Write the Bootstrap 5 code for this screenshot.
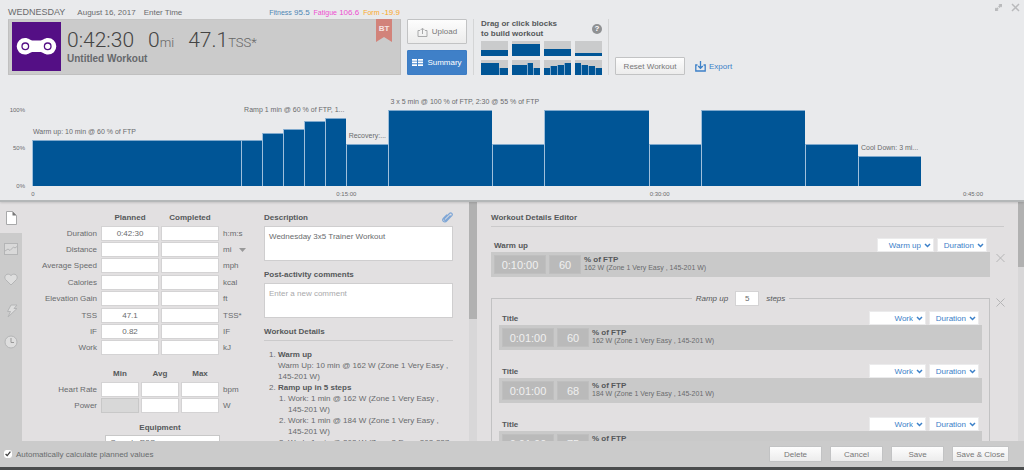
<!DOCTYPE html>
<html lang="en">
<head>
<meta charset="utf-8">
<meta name="viewport" content="width=device-width, initial-scale=1">
<title>Untitled Workout</title>
<link rel="stylesheet" href="https://cdn.jsdelivr.net/npm/bootstrap@5.3.0/dist/css/bootstrap.min.css">
<script src="https://cdn.jsdelivr.net/npm/bootstrap@5.3.0/dist/js/bootstrap.bundle.min.js"></script>
<style>
  :root { --blue: #005596; --link: #3c80c8; --ink: #696b6d; --strong: #55585a; --grey: #cbcbcb; --plot: 76px; }
  body { font: 8px/11px "Liberation Sans", Arial, sans-serif; color: var(--ink); background: #e2e0e1; }
  b, strong, h2, h3, .heading { font-size: 8px; line-height: 11px; font-weight: 700; color: var(--strong); margin: 0; }
  input, select, textarea, button { font-family: inherit; color: inherit; }
  svg { display: block; flex: none; }

  /* top panel */
  .top-panel { background: #e9eaec; border-bottom: 2px solid #b4b7b8; padding: 5px 8px 0; position: relative; box-shadow: 0 1px 2px #0002; }
  .window-tools { top: 3px; right: 4px; }
  .icon-btn { background: none; border: 0; padding: 0; color: #b9babc; }
  .day { font-size: 9px; }
  .metric-name { font-size: 7px; }
  .date-row { height: 14px; width: 392px; }
  .tools-row { height: 56px; gap: 6px; }
  .summary-box { flex: 0 1 393px; background: var(--grey); border: 1px solid #c0c0c0; border-top-color: #c6c6c6; padding: 2px 3px; }
  .sport { width: 49px; height: 49px; background: #540f85; }
  .totals-col { padding-left: 6px; }
  .totals { font-family: Roboto, "Liberation Sans", sans-serif; font-weight: 300; font-size: 21px; line-height: 24px; color: #444; padding-top: 6px; gap: 14px; }
  .totals small { font-size: 13px; color: #666; }
  .totals-col h2 { font-size: 10px; line-height: 8px; color: #66686b; }
  .ribbon { width: 16px; height: 23px; top: -1px; right: 8px; background: #d2837a; color: #f6e4e2; font-weight: 700; text-align: center; line-height: 19px; clip-path: polygon(0 0, 100% 0, 100% 100%, 50% 78%, 0 100%); }
  .tool { --bs-btn-border-radius: 1px; --bs-btn-padding-x: 4px; --bs-btn-padding-y: 0; --bs-btn-font-size: 8px; --bs-btn-line-height: 11px; --bs-btn-color: #777; --bs-btn-border-color: #c2c3c4; --bs-btn-hover-color: #555; --bs-btn-hover-border-color: #aaa; background: linear-gradient(#fdfdfd, #ececec); }
  .tool-main { --bs-btn-color: #fff; --bs-btn-border-color: #3c7cc4; --bs-btn-hover-color: #fff; background: #3f80c8; }
  .tool-stack { width: 60px; }
  .tool-stack .tool { height: 25px; }
  .reset { height: 18px; width: 70px; }
  .builder { border: solid #d4d5d6; border-width: 0 1px; padding: 0 6px 0 7px; width: 136px; }
  .builder .heading { line-height: 10px; }
  .thumbs { display: grid; grid-template-columns: repeat(4, 1fr); grid-auto-rows: 15px; gap: 4px; }
  .thumbs button { background: #cacbcc; border: 0; padding: 0; display: flex; align-items: flex-end; }
  .thumbs i { background: var(--blue); flex: 1; }
  .thumbs i + i { border-left: 1px solid #7fa9cd; }
  .help { width: 10px; height: 10px; border-radius: 50%; background: #8f9193; color: #fff; font-weight: 700; line-height: 10px; text-align: center; }
  .export { color: var(--link); text-decoration: none; gap: 3px; margin: 0 0 3px 10px; }

  /* chart */
  .chart { padding: 19px 43px 0 0; }
  .y-axis { width: 24px; padding-right: 7px; height: var(--plot); font-size: 6px; }
  .y-axis span { height: 0; line-height: 0; text-align: right; }
  .profile { height: 92px; }
  .group-col { display: flex; flex-direction: column; justify-content: flex-end; min-width: 0; }
  .group-col > span { font-size: 7px; line-height: 9px; padding: 0 0 4px 1px; white-space: nowrap; }
  .group-col > span.inset { padding-left: 3px; }
  .bars { display: flex; align-items: flex-end; }
  .bars i { height: calc(var(--pct) * var(--plot) / 100); background: var(--blue); border-left: 1px solid #9fbfdb; border-top: 1px solid #7fa9cd; }
  .x-axis { font-size: 6px; height: 14px; padding-top: 3px; margin-left: 25px; }
  .x-axis span { width: 0; display: flex; justify-content: center; white-space: nowrap; }

  /* lower panes */
  .rail { width: 22px; background: var(--grey); color: #b4b5b6; }
  .rail button { height: 31px; width: 22px; display: flex; align-items: center; justify-content: center; background: none; border: 0; padding: 0; color: inherit; }
  .rail button.current { background: #e2e0e1; color: #8d8f90; }
  .left-pane { flex: 0 0 447px; }
  .track { width: 8px; background: #d8d7d8; }
  .track.slim { width: 6px; }
  .thumb { background: #b1b1b1; }
  .form-col { width: 239px; padding: 10px 0 0 8px; }
  .fields { display: grid; grid-template-columns: 67px 1fr 38px; column-gap: 4px; grid-auto-rows: 1fr; align-items: center; }
  .metrics { height: 131px; margin-top: 2px; }
  .ranges { height: 33px; margin-top: 2px; }
  .fields > label { text-align: right; line-height: 15px; }
  .fields .pair { display: grid; grid-auto-flow: column; grid-auto-columns: 1fr; gap: 2px; }
  .cell { height: 15px; padding: 0; border: 1px solid #d4d3d4; border-radius: 0; text-align: center; font-size: 8px; line-height: 11px; color: var(--ink); background: #fff; min-width: 0; }
  .cell:disabled { background: #d8d8d8; border-color: #c8c8c8; }
  .bike { height: 16px; padding: 0 4px; font-size: 8px; line-height: 12px; border: 1px solid #c8c8c8; border-radius: 0; color: var(--ink); background-size: 8px 6px; background-position: right 6px center; }
  .bike-row { display: grid; grid-template-columns: 67px 115px; column-gap: 8px; margin-top: 2px; }
  .notes-col { padding: 10px 16px 0 3px; }
  .note { height: 35px; margin-top: 3px; padding: 4px; border: 1px solid #cfcecf; border-radius: 0; font-size: 8px; line-height: 11px; resize: none; color: var(--ink); }
  .note::placeholder { color: #a9a9ab; }
  .rule { border-top: 1px solid #cbcacb; margin-top: 3px; }
  .steps { padding-left: 14px; margin: 0; }
  .steps .steps { padding-left: 10px; }
  .steps p { margin: 0; }

  .editor { padding: 10px 14px 0; }
  .step-list { margin-right: 14px; padding-top: 11px; }
  .pick { width: 57px; height: 14px; border: 1px solid #ebebec; border-radius: 0; appearance: none; padding: 0 12px 0 0; font-size: 8px; line-height: 11px; color: var(--link); text-align-last: right;
    background: #fff url("data:image/svg+xml,%3Csvg xmlns='http://www.w3.org/2000/svg' viewBox='0 0 7 5'%3E%3Cpath d='M1 1l2.5 2.5L6 1' fill='none' stroke='%233c80c8' stroke-width='1.5'/%3E%3C/svg%3E") no-repeat right 2px center / 7px 5px; }
  .pick.short { width: 50px; }
  .step-head { height: 14px; padding: 0 3px; gap: 3px; }
  .step-bar { background: #c9c9c9; padding: 3px; height: 25px; gap: 3px; }
  .pill { height: 19px; border: 1px solid #bfbfbf; border-radius: 0; background: #bababa; color: #f0f0f0; text-align: center; font-size: 11px; padding: 0; }
  .pill.time { width: 52px; }
  .pill.pct { width: 32px; }
  .step-bar .sub { font-size: 7px; line-height: 8px; }
  .step-bar b { line-height: 9px; display: block; }
  .ramp-wrap { margin-top: 13px; }
  .ramp { border: 1px solid #c2c2c3; padding: 0 7px; }
  .ramp-title { float: none; width: auto; margin: 0 auto 5px; padding: 0 4px; font-size: 8px; line-height: 11px; font-style: italic; height: 16px; color: var(--strong); gap: 7px; }
  .ramp-title .cell { width: 24px; }
  .ramp-step + .ramp-step { margin-top: 14px; }
  .remove { right: -15px; }

  .foot { background: var(--grey); height: 29px; border-bottom: 3px solid #4a4c4d; padding: 0 15px 0 4px; }
  .foot .tool { width: 53px; height: 16px; }
  .foot .tool.wide { width: 57px; padding: 0; }
  .foot input { width: 8px; height: 8px; margin: 0; accent-color: #fff; }
</style>
</head>
<body class="d-flex flex-column vh-100 overflow-hidden">

<header class="top-panel flex-shrink-0">
  <div class="window-tools position-absolute d-flex gap-2">
    <button class="icon-btn" aria-label="Resize"><svg width="9" height="9" viewBox="0 0 9 9"><path d="M4.500 1H8v3.500L7 3.500 5.600 4.900 4.100 3.400 5.500 2zM4.500 8H1V4.500l1 1 1.200-1.200 1.500 1.500L3.500 7z" fill="currentColor"/></svg></button>
    <button class="icon-btn" aria-label="Close"><svg width="9" height="9" viewBox="0 0 9 9"><path d="M1 1l7 7M8 1L1 8" stroke="currentColor" stroke-width="1.500"/></svg></button>
  </div>

  <div class="date-row d-flex align-items-center">
    <span class="day">WEDNESDAY</span>
    <span class="ms-2 ps-1">August 16, 2017</span>
    <span class="ms-2">Enter Time</span>
    <div class="ms-auto d-flex gap-1">
      <span style="color:#4d86b4"><span class="metric-name">Fitness</span> 95.5</span>
      <span style="color:#ee4fd0"><span class="metric-name">Fatigue</span> 106.6</span>
      <span style="color:#fba928"><span class="metric-name">Form</span> -19.9</span>
    </div>
  </div>

  <div class="tools-row d-flex">
    <section class="summary-box position-relative d-flex">
      <div class="sport">
        <svg width="49" height="49" viewBox="0 0 49 49"><path d="M13 16c4 0 5 2.500 8 2.500h7c3 0 4-2.500 8-2.500a8.300 8.300 0 0 1 0 16.600c-4 0-5-2.500-8-2.500h-7c-3 0-4 2.500-8 2.500A8.300 8.300 0 0 1 13 16z" fill="#fff"/><g fill="#fff" stroke="#540f85" stroke-width="1.300"><circle cx="13.300" cy="24.300" r="3.300"/><circle cx="35.700" cy="24.300" r="3.300"/></g></svg>
      </div>
      <div class="totals-col">
        <div class="totals d-flex">
          <span>0:42:30</span><span>0<small>mi</small></span><span>47.1<small>TSS*</small></span>
        </div>
        <h2>Untitled Workout</h2>
      </div>
      <span class="ribbon position-absolute">BT</span>
    </section>

    <div class="tool-stack d-flex flex-column justify-content-between">
      <button class="btn tool d-flex align-items-center justify-content-center gap-1"><svg width="11" height="10" viewBox="0 0 11 10"><path d="M3 3.500H1v6h9v-6H8M5.500 7V1.500M3.500 3.200l2-2 2 2" fill="none" stroke="#a9aaab"/></svg>Upload</button>
      <button class="btn tool tool-main d-flex align-items-center justify-content-center gap-1"><svg width="11" height="7" viewBox="0 0 11 7"><path d="M0 0h5v1.700H0zM6 0h5v1.700H6zM0 2.600h5v1.700H0zM6 2.600h5v1.700H6zM0 5.200h5v1.700H0zM6 5.200h5v1.700H6z" fill="#fff"/></svg>Summary</button>
    </div>

    <section class="builder d-flex flex-column justify-content-between">
      <div class="d-flex justify-content-between align-items-center">
        <div class="heading">Drag or click blocks<br>to build workout</div>
        <span class="help">?</span>
      </div>
      <div class="thumbs">
        <button aria-label="Warm up"><i style="height:40%"></i></button>
        <button aria-label="Active"><i style="height:80%"></i></button>
        <button aria-label="Recovery"><i style="height:50%"></i></button>
        <button aria-label="Cool down"><i style="height:20%"></i></button>
        <button aria-label="Two step repeat"><i style="height:80%;flex-grow:2"></i><i style="height:44%"></i></button>
        <button aria-label="Three step repeat"><i style="height:66%;flex-grow:3"></i><i style="height:80%"></i><i style="height:44%"></i></button>
        <button aria-label="Ramp up"><i style="height:50%"></i><i style="height:60%"></i><i style="height:70%"></i><i style="height:80%"></i></button>
        <button aria-label="Ramp down"><i style="height:80%"></i><i style="height:70%"></i><i style="height:60%"></i><i style="height:50%"></i></button>
      </div>
    </section>

    <div class="d-flex align-items-end">
      <button class="btn tool reset">Reset Workout</button>
      <a class="export d-flex align-items-center" href="#"><svg width="11" height="11" viewBox="0 0 11 11"><path d="M2.500 4H.8v6h9.400V4H8.500M5.500 0v7M3.200 5l2.300 2.300L7.800 5" fill="none" stroke="currentColor" stroke-width="1.300"/></svg>Export</a>
    </div>
  </div>

  <section class="chart">
    <div class="d-flex align-items-end">
      <div class="y-axis d-flex flex-column justify-content-between"><span>100%</span><span>50%</span><span>0%</span></div>
      <div class="profile d-flex flex-grow-1">
        <div class="group-col" style="flex:10 0 0"><span>Warm up: 10 min @ 60 % of FTP</span>
          <div class="bars"><i style="--pct:60;flex:1"></i></div></div>
        <div class="group-col" style="flex:5 0 0"><span class="inset">Ramp 1 min @ 60 % of FTP, 1...</span>
          <div class="bars"><i style="--pct:60;flex:1"></i><i style="--pct:70;flex:1"></i><i style="--pct:75;flex:1"></i><i style="--pct:85;flex:1"></i><i style="--pct:90;flex:1"></i></div></div>
        <div class="group-col" style="flex:2 0 0"><span class="inset">Recovery:...</span>
          <div class="bars"><i style="--pct:55;flex:1"></i></div></div>
        <div class="group-col" style="flex:22.5 0 0"><span class="inset">3 x 5 min @ 100 % of FTP, 2:30 @ 55 % of FTP</span>
          <div class="bars"><i style="--pct:100;flex:2"></i><i style="--pct:55;flex:1"></i><i style="--pct:100;flex:2"></i><i style="--pct:55;flex:1"></i><i style="--pct:100;flex:2"></i><i style="--pct:55;flex:1"></i></div></div>
        <div class="group-col" style="flex:3 0 0"><span class="inset">Cool Down: 3 mi...</span>
          <div class="bars"><i style="--pct:40;flex:1"></i></div></div>
        <div style="flex:2.5 0 0"></div>
      </div>
    </div>
    <div class="x-axis d-flex justify-content-between"><span>0</span><span>0:15:00</span><span>0:30:00</span><span>0:45:00</span></div>
  </section>
</header>

<main class="d-flex flex-grow-1 overflow-hidden">
  <nav class="rail flex-shrink-0" aria-label="Sections">
    <button class="current" aria-label="Summary"><svg width="11" height="14" viewBox="0 0 11 14"><path d="M.5.5h6l4 4v9H.5z" fill="#fff" stroke="#a8a9aa"/><path d="M6.500.5v4h4z" fill="#777"/></svg></button>
    <button aria-label="Charts"><svg width="14" height="12" viewBox="0 0 14 12"><rect x=".5" y=".5" width="13" height="11" fill="#d9d9d9" stroke="currentColor"/><path d="M1 8l3-2 2 1.500L9.500 4l1.500 1 2-1.500" fill="none" stroke="currentColor"/></svg></button>
    <button aria-label="Heart rate"><svg width="14" height="13" viewBox="0 0 14 13"><path d="M7 12L1.500 6.500C-1 3 3.500-1 7 2.500 10.500-1 15 3 12.500 6.500z" fill="#dedede" stroke="currentColor"/></svg></button>
    <button aria-label="Power"><svg width="13" height="14" viewBox="0 0 13 14"><path d="M6 1h6L9 4.500h3L3 13l2.500-5.500h-3z" fill="#dedede" stroke="currentColor"/></svg></button>
    <button aria-label="Time"><svg width="14" height="14" viewBox="0 0 14 14"><circle cx="7" cy="7" r="6" fill="#dedede" stroke="currentColor"/><path d="M7 3v4.500h3" fill="none" stroke="#999"/></svg></button>
  </nav>

  <div class="left-pane d-flex overflow-hidden">
    <form class="form-col flex-shrink-0">
      <div class="fields">
        <span></span><div class="pair text-center"><span class="heading">Planned</span><span class="heading">Completed</span></div><span></span>
      </div>
      <div class="fields metrics">
        <label for="dur">Duration</label><div class="pair"><input class="form-control cell" id="dur" value="0:42:30"><input class="form-control cell" aria-label="Duration completed"></div><span>h:m:s</span>
        <label for="dist">Distance</label><div class="pair"><input class="form-control cell" id="dist"><input class="form-control cell" aria-label="Distance completed"></div><span class="d-flex align-items-center gap-2">mi <svg width="7" height="4" viewBox="0 0 7 4"><path d="M0 0h7L3.500 4z" fill="#999"/></svg></span>
        <label for="spd">Average Speed</label><div class="pair"><input class="form-control cell" id="spd"><input class="form-control cell" aria-label="Average Speed completed"></div><span>mph</span>
        <label for="cal">Calories</label><div class="pair"><input class="form-control cell" id="cal"><input class="form-control cell" aria-label="Calories completed"></div><span>kcal</span>
        <label for="elev">Elevation Gain</label><div class="pair"><input class="form-control cell" id="elev"><input class="form-control cell" aria-label="Elevation Gain completed"></div><span>ft</span>
        <label for="tss">TSS</label><div class="pair"><input class="form-control cell" id="tss" value="47.1"><input class="form-control cell" aria-label="TSS completed"></div><span>TSS*</span>
        <label for="if">IF</label><div class="pair"><input class="form-control cell" id="if" value="0.82"><input class="form-control cell" aria-label="IF completed"></div><span>IF</span>
        <label for="work">Work</label><div class="pair"><input class="form-control cell" id="work"><input class="form-control cell" aria-label="Work completed"></div><span>kJ</span>
      </div>
      <div class="fields mt-2 pt-1">
        <span></span><div class="pair text-center"><span class="heading">Min</span><span class="heading">Avg</span><span class="heading">Max</span></div><span></span>
      </div>
      <div class="fields ranges">
        <label for="hr">Heart Rate</label><div class="pair"><input class="form-control cell" id="hr"><input class="form-control cell" aria-label="Heart Rate average"><input class="form-control cell" aria-label="Heart Rate maximum"></div><span>bpm</span>
        <label for="pw">Power</label><div class="pair"><input class="form-control cell" id="pw" disabled><input class="form-control cell" aria-label="Power average"><input class="form-control cell" aria-label="Power maximum"></div><span>W</span>
      </div>
      <div class="fields mt-2"><span></span><h3 class="text-center">Equipment</h3><span></span></div>
      <div class="bike-row align-items-center">
        <label for="bike" class="text-end">Bike</label>
        <select class="form-select bike" id="bike"><option>Cervelo P3C</option></select>
      </div>
    </form>

    <section class="notes-col flex-grow-1">
      <div class="d-flex justify-content-between align-items-center">
        <label class="heading" for="desc">Description</label>
        <svg width="11" height="11" viewBox="0 0 11 11"><path d="M8.500 3.500L4 8C3 9 1.500 7.500 2.500 6.500l5-5C9-.2 11.200 2 9.800 3.600L4.600 9C2.500 11.500-.8 8.500 1.300 6.300L5 2.600" fill="none" stroke="#7ea6d6" stroke-width="1.200"/></svg>
      </div>
      <textarea class="form-control note" id="desc">Wednesday 3x5 Trainer Workout</textarea>
      <label class="heading mt-2 d-block" for="comments">Post-activity comments</label>
      <textarea class="form-control note" id="comments" placeholder="Enter a new comment"></textarea>
      <h3 class="mt-2">Workout Details</h3>
      <div class="rule pt-2">
        <ol class="steps">
          <li><b>Warm up</b><p>Warm Up: 10 min @ 162 W (Zone 1 Very Easy , <span class="text-nowrap">145-201 W)</span></p></li>
          <li><b>Ramp up in 5 steps</b>
            <ol class="steps">
              <li>Work: 1 min @ 162 W (Zone 1 Very Easy , <span class="text-nowrap">145-201 W)</span></li>
              <li>Work: 1 min @ 184 W (Zone 1 Very Easy , <span class="text-nowrap">145-201 W)</span></li>
              <li>Work: 1 min @ 202 W (Zone 2 Easy, 202-227</li>
            </ol>
          </li>
        </ol>
      </div>
    </section>
  </div>
  <div class="track flex-shrink-0"><div class="thumb" style="height:49%"></div></div>

  <section class="editor flex-grow-1 overflow-hidden">
    <h2>Workout Details Editor</h2>
    <div class="rule"></div>
    <div class="step-list">
      <div class="position-relative">
        <div class="step-head d-flex align-items-center"><h3 class="me-auto">Warm up</h3><select class="pick" aria-label="Step type"><option>Warm up</option></select><select class="pick short" aria-label="Length type"><option>Duration</option></select></div>
        <div class="step-bar d-flex"><input class="pill time" value="0:10:00" aria-label="Duration"><input class="pill pct" value="60" aria-label="Percent of FTP"><div><b>% of FTP</b><div class="sub">162 W (Zone 1 Very Easy , 145-201 W)</div></div></div>
        <button class="icon-btn remove position-absolute top-50 translate-middle-y" aria-label="Remove step"><svg width="9" height="9" viewBox="0 0 9 9"><path d="M.5.5l8 8M8.500.5l-8 8" stroke="#b5b5b6"/></svg></button>
      </div>

      <div class="ramp-wrap position-relative">
        <fieldset class="ramp">
          <legend class="ramp-title d-flex align-items-center"><label for="count">Ramp up</label><input class="form-control cell" id="count" value="5"><span>steps</span></legend>
          <div class="ramp-step">
            <div class="step-head d-flex align-items-center"><h3 class="me-auto">Title</h3><select class="pick" aria-label="Step type"><option>Work</option></select><select class="pick short" aria-label="Length type"><option>Duration</option></select></div>
            <div class="step-bar d-flex"><input class="pill time" value="0:01:00" aria-label="Duration"><input class="pill pct" value="60" aria-label="Percent of FTP"><div><b>% of FTP</b><div class="sub">162 W (Zone 1 Very Easy , 145-201 W)</div></div></div>
          </div>
          <div class="ramp-step">
            <div class="step-head d-flex align-items-center"><h3 class="me-auto">Title</h3><select class="pick" aria-label="Step type"><option>Work</option></select><select class="pick short" aria-label="Length type"><option>Duration</option></select></div>
            <div class="step-bar d-flex"><input class="pill time" value="0:01:00" aria-label="Duration"><input class="pill pct" value="68" aria-label="Percent of FTP"><div><b>% of FTP</b><div class="sub">184 W (Zone 1 Very Easy , 145-201 W)</div></div></div>
          </div>
          <div class="ramp-step">
            <div class="step-head d-flex align-items-center"><h3 class="me-auto">Title</h3><select class="pick" aria-label="Step type"><option>Work</option></select><select class="pick short" aria-label="Length type"><option>Duration</option></select></div>
            <div class="step-bar d-flex"><input class="pill time" value="0:01:00" aria-label="Duration"><input class="pill pct" value="75" aria-label="Percent of FTP"><div><b>% of FTP</b></div></div>
          </div>
        </fieldset>
        <button class="icon-btn remove position-absolute top-0 mt-2" aria-label="Remove ramp"><svg width="9" height="9" viewBox="0 0 9 9"><path d="M.5.5l8 8M8.500.5l-8 8" stroke="#b5b5b6"/></svg></button>
      </div>
    </div>
  </section>
  <div class="track slim flex-shrink-0"><div class="thumb" style="height:27%"></div></div>
</main>

<footer class="foot d-flex align-items-center flex-shrink-0">
  <input type="checkbox" id="auto" checked>
  <label for="auto" class="ms-1">Automatically calculate planned values</label>
  <div class="ms-auto d-flex gap-2">
    <button class="btn tool">Delete</button>
    <button class="btn tool">Cancel</button>
    <button class="btn tool">Save</button>
    <button class="btn tool wide">Save &amp; Close</button>
  </div>
</footer>
</body>
</html>
